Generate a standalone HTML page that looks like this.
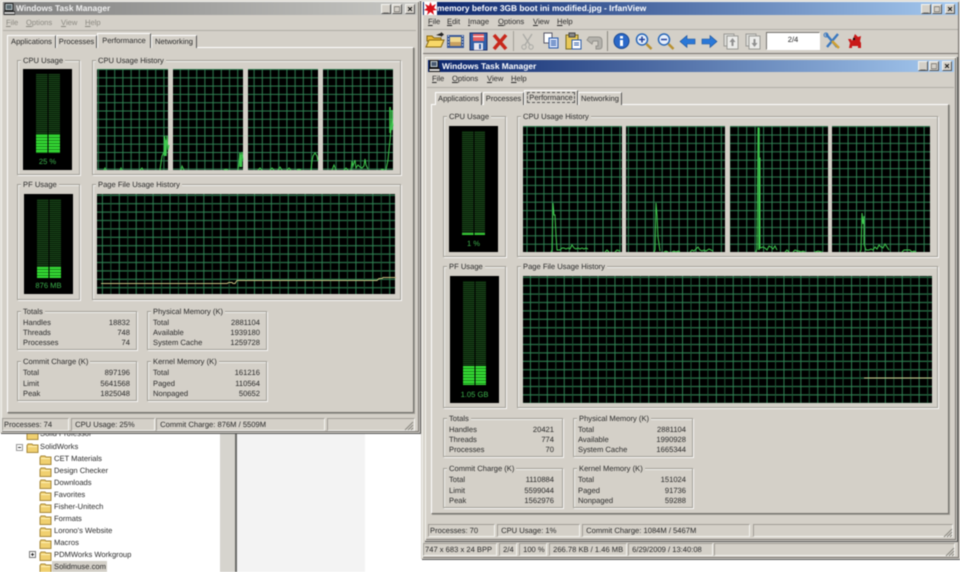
<!DOCTYPE html>
<html><head><meta charset="utf-8"><title>Task Manager</title>
<style>
html,body{margin:0;padding:0;background:#fff}
body{width:960px;height:572px;position:relative;overflow:hidden;font-family:"Liberation Sans",sans-serif;color:#2a2a2a;text-rendering:geometricPrecision}
#r{position:absolute;left:0;top:0;width:960px;height:572px;overflow:hidden;filter:blur(.42px)}
.a,.t,.g,.c,.n,.tab{position:absolute}
.t{white-space:nowrap;font-size:7.6px;line-height:10px}
.win{position:absolute;background:#d4d0c8;box-sizing:border-box;border:1px solid #d4d0c8;box-shadow:inset 1px 1px 0 #f4f4f0,inset -1px -1px 0 #77746f,1px 1px 0 #555}
.bar{position:absolute;height:13px}
.ttl{position:absolute;font-weight:bold;font-size:8.4px;line-height:13px;white-space:nowrap;color:#fff}
.btn{position:absolute;width:10px;height:10px;background:#d4d0c8;box-sizing:border-box;border:1px solid;border-color:#f4f4f0 #555 #555 #f4f4f0;font:bold 9px/8px "Liberation Sans",sans-serif;text-align:center;color:#111}
.panel{position:absolute;box-sizing:border-box;border:1px solid;border-color:#fff #706d68 #706d68 #fff;background:#d4d0c8;box-shadow:1px 1px 0 #a09d96}
.tab{box-sizing:border-box;background:#d4d0c8;border-top:1px solid #fff;border-left:1px solid #fff;border-right:1px solid #555;font-size:7.6px;line-height:12px;text-align:center;white-space:nowrap}
.g{box-sizing:border-box;border:1px solid #a3a098;box-shadow:1px 1px 0 #f8f8f6,inset 1px 1px 0 #f0f0ee}
.l{position:absolute;top:-5px;left:3px;background:#d4d0c8;padding:0 2px;font-size:7.6px;line-height:10px;white-space:nowrap}
.c{box-sizing:border-box;height:13px;border:1px solid;border-color:#a09d96 #f4f4f2 #f4f4f2 #a09d96;font-size:7.6px;line-height:11px;white-space:nowrap;padding-left:1px}
.n{font-size:7.6px;line-height:10px;text-align:right;white-space:nowrap}
.gr{color:#8a8880}
</style></head><body><div id="r">

<!-- lower-left explorer -->
<div class="a" style="left:220px;top:432px;width:15px;height:140px;background:#d6d4ce"></div>
<div class="a" style="left:235px;top:432px;width:2px;height:140px;background:#6a6a66"></div>
<div class="a" style="left:237px;top:432px;width:128px;height:140px;background:#f3f3f3"></div>
<div class="a" style="left:52px;top:561px;width:55px;height:11px;background:#d4d0c8"></div>
<svg class="a" style="left:0;top:430px" width="120" height="142" viewBox="0 430 120 142">
<defs><g id="fo"><path d="M0 2.500 L1 1 H5 L6 2 H11 V9.500 H0Z" fill="#f0d070" stroke="#a8893a" stroke-width="1"/><rect x="1" y="3" width="9" height="1" fill="#fff2b8"/></g></defs>
<use href="#fo" x="27" y="430"/><use href="#fo" x="27" y="443"/>
<use href="#fo" x="40" y="455"/><use href="#fo" x="40" y="467"/><use href="#fo" x="40" y="479"/><use href="#fo" x="40" y="491"/><use href="#fo" x="40" y="503"/><use href="#fo" x="40" y="515"/><use href="#fo" x="40" y="527"/><use href="#fo" x="40" y="539"/><use href="#fo" x="40" y="551"/><use href="#fo" x="40" y="563"/>
<rect x="16.500" y="444.500" width="6" height="6" fill="#fff" stroke="#999"/><path d="M18 447.500h3" stroke="#333"/>
<rect x="29.500" y="551.500" width="6" height="6" fill="#fff" stroke="#777"/><path d="M31 554.500h3M32.500 553v3" stroke="#222"/>
</svg>
<div class="t" style="left:40px;top:429px">Solid Professor</div>
<div class="t" style="left:40px;top:442px">SolidWorks</div>
<div class="t" style="left:54px;top:454px">CET Materials</div>
<div class="t" style="left:54px;top:466px">Design Checker</div>
<div class="t" style="left:54px;top:478px">Downloads</div>
<div class="t" style="left:54px;top:490px">Favorites</div>
<div class="t" style="left:54px;top:502px">Fisher-Unitech</div>
<div class="t" style="left:54px;top:514px">Formats</div>
<div class="t" style="left:54px;top:526px">Lorono's Website</div>
<div class="t" style="left:54px;top:538px">Macros</div>
<div class="t" style="left:54px;top:550px">PDMWorks Workgroup</div>
<div class="t" style="left:54px;top:562px">Solidmuse.com</div>

<!-- LEFT WINDOW -->
<div class="win" style="left:0;top:0;width:420px;height:433px"></div>
<div class="bar" style="left:3px;top:2px;width:414px;background:linear-gradient(90deg,#7f7f7f,#c8c8c4)"></div>
<svg class="a" style="left:4px;top:3px" width="11" height="12"><rect x="1" y="0.500" width="8" height="7" fill="#b8c4c8" stroke="#222"/><rect x="2.500" y="2" width="5" height="4" fill="#5a6a70"/><rect x="0" y="8.500" width="11" height="3" fill="#ccc" stroke="#222"/></svg>
<div class="ttl" style="left:16px;top:2px;color:#f0f0f0">Windows Task Manager</div>
<div class="btn" style="left:381px;top:4px">_</div><div class="btn" style="left:392px;top:4px">□</div><div class="btn" style="left:405px;top:4px">×</div>
<div class="a" style="left:3px;top:30px;width:413px;height:1px;background:#b0ada6"></div>
<div class="t gr" style="left:6px;top:18px"><u>F</u>ile</div><div class="t gr" style="left:26px;top:18px"><u>O</u>ptions</div><div class="t gr" style="left:61px;top:18px"><u>V</u>iew</div><div class="t gr" style="left:85px;top:18px"><u>H</u>elp</div>

<div class="panel" style="left:7px;top:47px;width:407px;height:366px"></div>
<div class="tab" style="left:7px;top:35px;width:49px;height:13px">Applications</div>
<div class="tab" style="left:56px;top:35px;width:41px;height:13px">Processes</div>
<div class="tab" style="left:97px;top:33px;width:54px;height:15px;line-height:13px">Performance</div>
<div class="tab" style="left:151px;top:35px;width:46px;height:13px">Networking</div>

<div class="g" style="left:17px;top:60px;width:63px;height:115px"><span class="l">CPU Usage</span></div>
<div class="g" style="left:92px;top:60px;width:309px;height:115px"><span class="l">CPU Usage History</span></div>
<div class="g" style="left:17px;top:184px;width:63px;height:116px"><span class="l">PF Usage</span></div>
<div class="g" style="left:92px;top:184px;width:309px;height:116px"><span class="l">Page File Usage History</span></div>
<div class="g" style="left:17px;top:311px;width:120px;height:39px"><span class="l">Totals</span></div>
<div class="g" style="left:147px;top:311px;width:120px;height:39px"><span class="l">Physical Memory (K)</span></div>
<div class="g" style="left:17px;top:361px;width:120px;height:40px"><span class="l">Commit Charge (K)</span></div>
<div class="g" style="left:147px;top:361px;width:120px;height:40px"><span class="l">Kernel Memory (K)</span></div>

<div class="t" style="left:23px;top:318px">Handles</div><div class="n" style="left:80px;width:50px;top:318px">18832</div>
<div class="t" style="left:23px;top:328px">Threads</div><div class="n" style="left:80px;width:50px;top:328px">748</div>
<div class="t" style="left:23px;top:338px">Processes</div><div class="n" style="left:80px;width:50px;top:338px">74</div>
<div class="t" style="left:153px;top:318px">Total</div><div class="n" style="left:210px;width:50px;top:318px">2881104</div>
<div class="t" style="left:153px;top:328px">Available</div><div class="n" style="left:210px;width:50px;top:328px">1939180</div>
<div class="t" style="left:153px;top:338px">System Cache</div><div class="n" style="left:210px;width:50px;top:338px">1259728</div>
<div class="t" style="left:23px;top:368px">Total</div><div class="n" style="left:80px;width:50px;top:368px">897196</div>
<div class="t" style="left:23px;top:379px">Limit</div><div class="n" style="left:80px;width:50px;top:379px">5641568</div>
<div class="t" style="left:23px;top:389px">Peak</div><div class="n" style="left:80px;width:50px;top:389px">1825048</div>
<div class="t" style="left:153px;top:368px">Total</div><div class="n" style="left:210px;width:50px;top:368px">161216</div>
<div class="t" style="left:153px;top:379px">Paged</div><div class="n" style="left:210px;width:50px;top:379px">110564</div>
<div class="t" style="left:153px;top:389px">Nonpaged</div><div class="n" style="left:210px;width:50px;top:389px">50652</div>

<div class="c" style="left:2px;top:418px;width:67px">Processes: 74</div>
<div class="c" style="left:71px;top:418px;width:84px">&nbsp;CPU Usage: 25%</div>
<div class="c" style="left:156px;top:418px;width:169px">&nbsp;Commit Charge: 876M / 5509M</div>
<div class="c" style="left:327px;top:418px;width:88px"></div>

<!-- RIGHT WINDOW -->
<div class="win" style="left:421px;top:0;width:539px;height:559px"></div>
<div class="bar" style="left:423px;top:2px;width:535px;background:linear-gradient(90deg,#0a246a,#a6caf0)"></div>
<svg class="a" style="left:424px;top:2px" width="13" height="13"><rect width="13" height="13" fill="#fff"/><path d="M6.500 0L8 4 12 2 10 6 13 8 9 8.500 10 13 6.500 10 3 13 4 9 0 8 3 6 1 2 5 4Z" fill="#d8101a"/></svg>
<div class="ttl" style="left:437px;top:2px">memory before 3GB boot ini modified.jpg - IrfanView</div>
<div class="btn" style="left:921px;top:4px">_</div><div class="btn" style="left:932px;top:4px">□</div><div class="btn" style="left:945px;top:4px">×</div>
<div class="t" style="left:428px;top:17px"><u>F</u>ile</div><div class="t" style="left:447px;top:17px"><u>E</u>dit</div><div class="t" style="left:468px;top:17px"><u>I</u>mage</div><div class="t" style="left:498px;top:17px"><u>O</u>ptions</div><div class="t" style="left:533px;top:17px"><u>V</u>iew</div><div class="t" style="left:557px;top:17px"><u>H</u>elp</div>
<div class="a" style="left:423px;top:29px;width:535px;height:1px;background:#b0ada6"></div>
<div class="a" style="left:423px;top:53px;width:535px;height:1px;background:#77746f"></div>

<!-- toolbar -->
<svg class="a" style="left:424px;top:30px" width="440" height="23" viewBox="424 30 440 23">
<path d="M427 36h5l2 2h7v3h-14z" fill="#e8b838" stroke="#8a6a10"/><path d="M426 47l3-7h15l-3 7z" fill="#f8d868" stroke="#8a6a10"/><path d="M436 35l5-2v-1l3 2.500-3 2.500v-1z" fill="#222"/>
<rect x="447" y="35" width="17" height="13" fill="#3a5a98"/><rect x="450" y="37" width="11" height="9" fill="#f0d890"/><rect x="450" y="42" width="11" height="4" fill="#c8a060"/><path d="M448 36h1M448 39h1M448 42h1M448 45h1M462 36h1M462 39h1M462 42h1M462 45h1" stroke="#fff"/>
<rect x="470" y="33" width="17" height="17" fill="#3060a8" stroke="#20306a"/><rect x="473" y="34" width="11" height="7" fill="#e86060"/><rect x="473" y="36" width="11" height="1" fill="#fff"/><rect x="474" y="43" width="9" height="7" fill="#e8e8f0"/><rect x="479" y="44" width="2" height="5" fill="#3060a8"/>
<path d="M494 35l12 14M506 35l-12 14" stroke="#c8281c" stroke-width="3.500"/>
<rect x="513" y="31" width="1" height="20" fill="#a3a098"/>
<path d="M523 34l7 11M532 34l-7 11" stroke="#a8a8a4" stroke-width="1.200"/><circle cx="524" cy="47" r="2.200" fill="none" stroke="#a8a8a4"/><circle cx="531" cy="47" r="2.200" fill="none" stroke="#a8a8a4"/>
<rect x="544" y="33" width="8" height="10" fill="#fff" stroke="#556"/><rect x="549" y="38" width="9" height="10" fill="#d0dcf4" stroke="#2a5aa8"/><path d="M551 41h5M551 43h5M551 45h5" stroke="#2a5aa8"/>
<rect x="566" y="35" width="12" height="14" fill="#e8c858" stroke="#7a6a20"/><rect x="569" y="33" width="6" height="4" fill="#888" stroke="#444"/><rect x="572" y="40" width="9" height="9" fill="#fff" stroke="#2a5aa8"/><path d="M574 43h5M574 45h5" stroke="#2a5aa8"/>
<path d="M589 37h9q4 0 4 4v5q0 3-3 3h-3v-3h2v-5h-5l-1 3-5-4z" fill="#b4b2ac" stroke="#93918b"/>
<rect x="607" y="31" width="1" height="20" fill="#8a8880"/>
<circle cx="621.500" cy="41" r="7.500" fill="#2a68c8" stroke="#1a4890"/><rect x="620" y="40" width="3" height="6" fill="#fff"/><rect x="620" y="36" width="3" height="2.500" fill="#fff"/>
<circle cx="642" cy="39.500" r="5.500" fill="#e8f0fc" stroke="#2a68b8" stroke-width="1.500"/><path d="M639 39.500h6M642 36.500v6" stroke="#20409a" stroke-width="1.500"/><path d="M646.500 44l5 5" stroke="#b89030" stroke-width="2.500"/>
<circle cx="664" cy="39.500" r="5.500" fill="#e8f0fc" stroke="#2a68b8" stroke-width="1.500"/><path d="M661 39.500h6" stroke="#20409a" stroke-width="1.500"/><path d="M668.500 44l5 5" stroke="#b89030" stroke-width="2.500"/>
<path d="M680 41.500l7-6v3.500h8v5h-8v3.500z" fill="#2a78d8" stroke="#1a5098" stroke-width=".6"/>
<path d="M717 41.500l-7-6v3.500h-8v5h8v3.500z" fill="#2a78d8" stroke="#1a5098" stroke-width=".6"/>
<rect x="724" y="34" width="10" height="12" fill="#dcdcd8" stroke="#9a9a96"/><rect x="727" y="36" width="11" height="13" fill="#ececea" stroke="#9a9a96"/><path d="M732.500 38l3 4h-2v4h-2v-4h-2z" fill="#909090"/>
<rect x="746" y="34" width="10" height="12" fill="#dcdcd8" stroke="#9a9a96"/><rect x="749" y="36" width="11" height="13" fill="#ececea" stroke="#9a9a96"/><path d="M754.500 47l3-4h-2v-4h-2v4h-2z" fill="#909090"/>
<path d="M826 34l11 13M838 34l-11 13" stroke="#3a78c0" stroke-width="2.400"/><path d="M832 41l7 7" stroke="#d0a030" stroke-width="2.500"/><circle cx="826" cy="35" r="2" fill="none" stroke="#3a78c0"/>
<path d="M848 39h3l1 2 3-7 3 3 3-1-1 5 1 2v5h-3v-2h-6v2h-3l1-5z" fill="#c81818"/><rect x="853" y="38" width="2" height="2" fill="#111"/>
</svg>
<div class="a" style="left:766px;top:32px;width:54px;height:18px;box-sizing:border-box;background:#fff;border:1px solid;border-color:#77746f #fff #fff #77746f"></div>
<div class="t" style="left:766px;width:54px;text-align:center;top:35px">2/4</div>

<!-- inner window -->
<div class="win" style="left:424px;top:56px;width:533px;height:485px"></div>
<div class="bar" style="left:428px;top:60px;width:526px;height:12px;background:linear-gradient(90deg,#0a246a,#a6caf0)"></div>
<svg class="a" style="left:429px;top:60px" width="11" height="12"><rect x="1" y="0.500" width="8" height="7" fill="#c8d4d8" stroke="#111"/><rect x="2.500" y="2" width="5" height="4" fill="#4a5a70"/><rect x="0" y="8.500" width="11" height="3" fill="#ddd" stroke="#111"/></svg>
<div class="ttl" style="left:442px;top:60px;line-height:12px">Windows Task Manager</div>
<div class="btn" style="left:918px;top:61px">_</div><div class="btn" style="left:929px;top:61px">□</div><div class="btn" style="left:942px;top:61px">×</div>
<div class="t" style="left:432px;top:74px"><u>F</u>ile</div><div class="t" style="left:452px;top:74px"><u>O</u>ptions</div><div class="t" style="left:487px;top:74px"><u>V</u>iew</div><div class="t" style="left:511px;top:74px"><u>H</u>elp</div>
<div class="a" style="left:427px;top:87px;width:527px;height:1px;background:#b0ada6"></div>

<div class="panel" style="left:431px;top:104px;width:518px;height:410px"></div>
<div class="tab" style="left:435px;top:92px;width:47px;height:13px">Applications</div>
<div class="tab" style="left:483px;top:92px;width:41px;height:13px">Processes</div>
<div class="tab" style="left:524px;top:90px;width:54px;height:15px;line-height:13px"><span style="outline:1px dashed #555;padding:0 1px">Performance</span></div>
<div class="tab" style="left:578px;top:92px;width:44px;height:13px">Networking</div>

<div class="g" style="left:443px;top:116px;width:63px;height:141px"><span class="l">CPU Usage</span></div>
<div class="g" style="left:517px;top:116px;width:421px;height:141px"><span class="l">CPU Usage History</span></div>
<div class="g" style="left:443px;top:266px;width:63px;height:142px"><span class="l">PF Usage</span></div>
<div class="g" style="left:517px;top:266px;width:421px;height:142px"><span class="l">Page File Usage History</span></div>
<div class="g" style="left:443px;top:418px;width:120px;height:39px"><span class="l">Totals</span></div>
<div class="g" style="left:573px;top:418px;width:120px;height:39px"><span class="l">Physical Memory (K)</span></div>
<div class="g" style="left:443px;top:468px;width:120px;height:40px"><span class="l">Commit Charge (K)</span></div>
<div class="g" style="left:573px;top:468px;width:120px;height:40px"><span class="l">Kernel Memory (K)</span></div>

<div class="t" style="left:449px;top:425px">Handles</div><div class="n" style="left:504px;width:50px;top:425px">20421</div>
<div class="t" style="left:449px;top:435px">Threads</div><div class="n" style="left:504px;width:50px;top:435px">774</div>
<div class="t" style="left:449px;top:445px">Processes</div><div class="n" style="left:504px;width:50px;top:445px">70</div>
<div class="t" style="left:578px;top:425px">Total</div><div class="n" style="left:636px;width:50px;top:425px">2881104</div>
<div class="t" style="left:578px;top:435px">Available</div><div class="n" style="left:636px;width:50px;top:435px">1990928</div>
<div class="t" style="left:578px;top:445px">System Cache</div><div class="n" style="left:636px;width:50px;top:445px">1665344</div>
<div class="t" style="left:449px;top:475px">Total</div><div class="n" style="left:504px;width:50px;top:475px">1110884</div>
<div class="t" style="left:449px;top:486px">Limit</div><div class="n" style="left:504px;width:50px;top:486px">5599044</div>
<div class="t" style="left:449px;top:496px">Peak</div><div class="n" style="left:504px;width:50px;top:496px">1562976</div>
<div class="t" style="left:578px;top:475px">Total</div><div class="n" style="left:636px;width:50px;top:475px">151024</div>
<div class="t" style="left:578px;top:486px">Paged</div><div class="n" style="left:636px;width:50px;top:486px">91736</div>
<div class="t" style="left:578px;top:496px">Nonpaged</div><div class="n" style="left:636px;width:50px;top:496px">59288</div>

<div class="c" style="left:428px;top:524px;width:67px">Processes: 70</div>
<div class="c" style="left:497px;top:524px;width:83px">&nbsp;CPU Usage: 1%</div>
<div class="c" style="left:582px;top:524px;width:168px">&nbsp;Commit Charge: 1084M / 5467M</div>
<div class="c" style="left:753px;top:524px;width:200px"></div>

<div class="c" style="left:423px;top:543px;width:74px">747 x 683 x 24 BPP</div>
<div class="c" style="left:499px;top:543px;width:18px">&nbsp;2/4</div>
<div class="c" style="left:519px;top:543px;width:28px">&nbsp;100 %</div>
<div class="c" style="left:549px;top:543px;width:78px">&nbsp;266.78 KB / 1.46 MB</div>
<div class="c" style="left:628px;top:543px;width:85px">&nbsp;6/29/2009 / 13:40:08</div>
<div class="c" style="left:714px;top:543px;width:241px"></div>

<!-- graphs -->
<svg class="a" style="left:0;top:0" width="960" height="572" viewBox="0 0 960 572">
<defs>
<pattern id="a1" patternUnits="userSpaceOnUse" x="97" y="69" width="8.200" height="8.300"><path d="M1.300 0V8.300M0 .5H8.200" stroke="#2f8052" stroke-width="1"/></pattern>
<pattern id="a2" patternUnits="userSpaceOnUse" x="97" y="194" width="16.900" height="8.400"><path d="M5.400 0V8.400M0 1.300H16.900" stroke="#2f8052" stroke-width="1"/><path d="M13.850 0V8.400" stroke="#1c5534" stroke-width="1"/></pattern>
<pattern id="a3" patternUnits="userSpaceOnUse" x="523" y="126" width="8.450" height="8.400"><path d="M4 0V8.400M0 .6H8.450" stroke="#2f8052" stroke-width="1"/></pattern>
<pattern id="a4" patternUnits="userSpaceOnUse" x="523" y="276" width="16.900" height="8.400"><path d="M7.450 0V8.400M0 1.300H16.900" stroke="#2f8052" stroke-width="1"/><path d="M15.900 0V8.400" stroke="#1c5534" stroke-width="1"/></pattern>
<pattern id="dim" patternUnits="userSpaceOnUse" width="2" height="2"><rect width="2" height="2" fill="#051805"/><rect width="2" height="1" fill="#1c4a1c"/></pattern>
<pattern id="hi" patternUnits="userSpaceOnUse" width="3" height="3"><rect width="3" height="3" fill="#1c8a1c"/><rect width="3" height="2" fill="#36dc36"/></pattern>
</defs>
<g fill="#000">
<rect x="23" y="69" width="49" height="101"/><rect x="24" y="194" width="49" height="100"/>
<rect x="449" y="126" width="49" height="126"/><rect x="450" y="276" width="49" height="127"/>
<rect x="97" y="69" width="71" height="101"/><rect x="173" y="69" width="70" height="101"/><rect x="248" y="69" width="70" height="101"/><rect x="323" y="69" width="70" height="101"/>
<rect x="97" y="194" width="298" height="100"/>
<rect x="523" y="126" width="99" height="126"/><rect x="626" y="126" width="99" height="126"/><rect x="730" y="126" width="98" height="126"/><rect x="832" y="126" width="98" height="126"/>
<rect x="523" y="276" width="409" height="127"/>
</g>
<g fill="url(#a1)"><rect x="97" y="69" width="71" height="101"/><rect x="173" y="69" width="70" height="101"/><rect x="248" y="69" width="70" height="101"/><rect x="323" y="69" width="70" height="101"/></g>
<rect x="97" y="194" width="298" height="100" fill="url(#a2)"/>
<g fill="url(#a3)"><rect x="523" y="126" width="99" height="126"/><rect x="626" y="126" width="99" height="126"/><rect x="730" y="126" width="98" height="126"/><rect x="832" y="126" width="98" height="126"/></g>
<rect x="523" y="276" width="409" height="127" fill="url(#a4)"/>
<!-- meters -->
<rect x="36" y="74" width="24" height="60" fill="url(#dim)"/><rect x="36" y="134" width="24" height="19" fill="url(#hi)"/><rect x="47.500" y="74" width="1" height="79" fill="#000"/>
<rect x="37" y="199" width="24" height="68" fill="url(#dim)"/><rect x="37" y="267" width="24" height="11" fill="url(#hi)"/><rect x="48.500" y="199" width="1" height="79" fill="#000"/>
<rect x="462" y="131" width="23" height="102" fill="url(#dim)"/><rect x="462" y="233" width="23" height="2" fill="#36c836"/><rect x="473.500" y="131" width="1" height="104" fill="#000"/>
<rect x="463" y="281" width="23" height="85" fill="url(#dim)"/><rect x="463" y="366" width="23" height="19" fill="url(#hi)"/><rect x="474.500" y="281" width="1" height="104" fill="#000"/>
<!-- traces -->
<g fill="none" stroke="#3fc84f" stroke-width="1">
<path d="M160 170l2-14 2-4 1-14 1 14 1-16 1 14 1-5"/>
<path d="M164.500 136v20M166 140v16" stroke-width="1.500"/>
<path d="M120 170l1-2 1 2M140 170l2-2 1 2M104 170l1-2 1 2"/>
<path d="M238 170l1-8 1-9 1 6 1-7 1 8"/>
<path d="M240 153v14M241.500 157v10" stroke-width="1.500"/>
<path d="M181 170l1-4 2 4M224 170l2-1 2 1"/>
<path d="M258 170l2-2 2 2M270 170l2-2 2 2M278 170l2-3 2 3M287 170l2-2 2 2M297 170l2-1 2 1M311 170l1-9 1-5 2-3 2 3 1 5"/>
<path d="M332 170l2-5 2 5M344 170l2-2 2 2M351 170l1-9 1 5 2-6 1 8 2-3 2 2 2 1 2-2 1-7 1 6 2 4M381 170l1-1 2 1M386 170l2-10 1-10 2-20 1-12 1 8"/>
<path d="M390 107v26M392 110v20" stroke-width="1.500"/>
<path d="M551 252l1-2 1-47 1 12 1 0 1 20 1 15h3l2-2 2 0 2 1 2-1 2 1 2-4 2 3 2 1 2-1 2 1 2-1 2 1 2-1 2 1M605 252l2-2 2 2M615 252l2-2 3 1"/>
<path d="M654 252l1-2 1-47 1 12 1 22 2 14M664 252l2-1 2 1M672 252l2-1 2 1 2-1 2 1M690 252l2-2 2 1 2-2 2-2 2 3 2 1 2-1 2 1 3-2 2 1 2 1"/>
<path d="M756 252l1-3 1-121 1 0v30l1 0v90l3-1 2 1 2 2 2-4 2 1 2 2 2-3 2 4M785 252l2-2 2 2M793 252l2-2 2 1 2 0 2 1 2-1 2 1M815 252l3-1 4 1"/>
<path d="M759 128v122" stroke-width="1.500"/>
<path d="M860 252l1-2 1-37 1 11 1-8 0 28 2 6 3 0 2-1 2 1 2-3 2 2 2-4 2 2 2 1 2-4 2 3 2 3M902 252l2-2 6 0 2 2 2-1 2 1"/>
</g>
<path d="M101 283.500H227l2-1h3l1 1h2l2-3H377l2-2h3l1-1h13" fill="none" stroke="#c8c080" stroke-width="1"/>
<path d="M864 378H932" fill="none" stroke="#d0c890" stroke-width="1"/>
<!-- window grips -->
<g stroke="#8a8880" stroke-width="1"><path d="M405 430l8-8M408 430l5-5M411 430l2-2"/><path d="M944 537l8-8M947 537l5-5M950 537l2-2"/><path d="M946 556l8-8M949 556l5-5M952 556l2-2"/></g>
</svg>
<div class="t" style="left:23px;width:49px;text-align:center;top:157px;color:#3cb04c">25 %</div>
<div class="t" style="left:24px;width:49px;text-align:center;top:281px;color:#3cb04c">876 MB</div>
<div class="t" style="left:449px;width:49px;text-align:center;top:239px;color:#3cb04c">1 %</div>
<div class="t" style="left:450px;width:49px;text-align:center;top:390px;color:#3cb04c">1.05 GB</div>
</div></body></html>
